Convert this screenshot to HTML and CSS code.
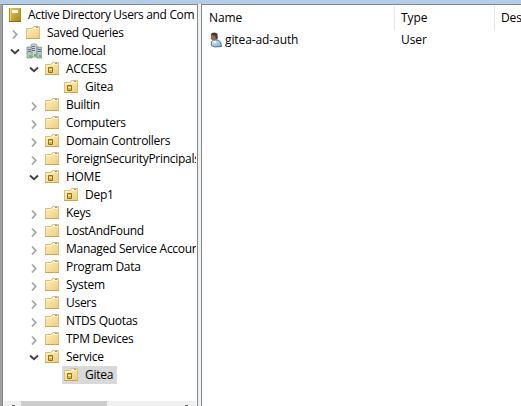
FILE: index.html
```html
<!DOCTYPE html>
<html lang="en">
<head>
<meta charset="utf-8">
<title>Active Directory Users and Computers</title>
<link rel="stylesheet" href="styles.css">
</head>
<body>
<svg class="defs" aria-hidden="true">
  <defs>
    <linearGradient id="fold" x1="0" y1="0" x2="1" y2="1"><stop offset="0" stop-color="#fff0c2"/><stop offset="1" stop-color="#eccd7c"/></linearGradient>
    <linearGradient id="gold" x1="0" y1="0" x2="1" y2="1"><stop offset="0" stop-color="#e6cb5c"/><stop offset="1" stop-color="#a5831a"/></linearGradient>
    <linearGradient id="shirt" x1="0" y1="0" x2="1" y2="1"><stop offset="0" stop-color="#d8effb"/><stop offset="1" stop-color="#78acd2"/></linearGradient>
    <symbol id="folder" viewBox="0 0 16 16">
      <path d="M1.5 3.5H7L8.5 1.5H14.5V13.5H1.5Z" fill="url(#fold)" stroke="#dfbf75"/>
      <path d="M9 2.5H13.5M2 4.5H7.5L8.5 3.5H14" stroke="#fff3c7" fill="none"/>
      <path d="M11 2.5H13" stroke="#4ca0dc"/>
      <path d="M1 13.5H15" stroke="#cda654"/>
    </symbol>
    <symbol id="ou" viewBox="0 0 16 16">
      <use href="#folder"/>
      <path d="M4.5 6.5H8.5V11.5H4.5Z" fill="#d9b84f" stroke="#947014"/>
      <path d="M5 8.5H8" stroke="#fff2b4"/>
    </symbol>
    <symbol id="right" viewBox="0 0 10 10"><path d="M3 1.5L6.7 5.5L3 9.5" fill="none" stroke="#a6a6a6" stroke-width="1.8"/></symbol>
    <symbol id="down" viewBox="0 0 10 10"><path d="M1 2.5L5 6.2L9 2.5" fill="none" stroke="#404040" stroke-width="1.9"/></symbol>
  </defs>
</svg>
<div class="window">
  <nav class="tree">
    <div class="rows">
      <div class="row root">
        <svg class="icon" viewBox="0 0 16 16"><path d="M1 1H13V15H1Z" fill="url(#gold)"/><path d="M1.5 1V15M12.5 1V15" stroke="#b18c20"/><path d="M2.5 1V15" stroke="#f0d76c"/><path d="M4 3H10V6H4Z" fill="#fffbea"/><path d="M1 14.5H13" stroke="#8b6809"/></svg>
        <span class="label">Active Directory Users and Com</span>
      </div>
      <div class="row l1"><svg class="arrow"><use href="#right"/></svg><svg class="icon"><use href="#folder"/></svg><span class="label">Saved Queries</span></div>
      <div class="row l1"><svg class="arrow"><use href="#down"/></svg>
        <svg class="icon domain" viewBox="0 0 16 16"><path d="M6 1H10L11 2V14H5V2Z" fill="#c8d1d6" stroke="#79868d" stroke-width=".7"/><path d="M1 4H5L6 5V15H1ZM11 4H15L16 5V15H11Z" fill="#bbc6cc" stroke="#728087" stroke-width=".7"/><path d="M6 3.5H9M6 5.5H9M6 7.5H9M2 6.5H5M2 8.5H5M12 6.5H15M12 8.5H15" stroke="#62717a"/><path d="M3 12H5V14H3ZM8 11H10V13H8ZM13 12H15V14H13Z" fill="#35dc20"/></svg>
        <span class="label">home.local</span></div>
      <div class="row l2"><svg class="arrow"><use href="#down"/></svg><svg class="icon"><use href="#ou"/></svg><span class="label">ACCESS</span></div>
      <div class="row l3"><svg class="icon"><use href="#ou"/></svg><span class="label">Gitea</span></div>
      <div class="row l2"><svg class="arrow"><use href="#right"/></svg><svg class="icon"><use href="#folder"/></svg><span class="label">Builtin</span></div>
      <div class="row l2"><svg class="arrow"><use href="#right"/></svg><svg class="icon"><use href="#folder"/></svg><span class="label">Computers</span></div>
      <div class="row l2"><svg class="arrow"><use href="#right"/></svg><svg class="icon"><use href="#ou"/></svg><span class="label">Domain Controllers</span></div>
      <div class="row l2"><svg class="arrow"><use href="#right"/></svg><svg class="icon"><use href="#folder"/></svg><span class="label">ForeignSecurityPrincipals</span></div>
      <div class="row l2"><svg class="arrow"><use href="#down"/></svg><svg class="icon"><use href="#ou"/></svg><span class="label">HOME</span></div>
      <div class="row l3"><svg class="icon"><use href="#ou"/></svg><span class="label">Dep1</span></div>
      <div class="row l2"><svg class="arrow"><use href="#right"/></svg><svg class="icon"><use href="#folder"/></svg><span class="label">Keys</span></div>
      <div class="row l2"><svg class="arrow"><use href="#right"/></svg><svg class="icon"><use href="#folder"/></svg><span class="label">LostAndFound</span></div>
      <div class="row l2"><svg class="arrow"><use href="#right"/></svg><svg class="icon"><use href="#folder"/></svg><span class="label">Managed Service Accounts</span></div>
      <div class="row l2"><svg class="arrow"><use href="#right"/></svg><svg class="icon"><use href="#folder"/></svg><span class="label">Program Data</span></div>
      <div class="row l2"><svg class="arrow"><use href="#right"/></svg><svg class="icon"><use href="#folder"/></svg><span class="label">System</span></div>
      <div class="row l2"><svg class="arrow"><use href="#right"/></svg><svg class="icon"><use href="#folder"/></svg><span class="label">Users</span></div>
      <div class="row l2"><svg class="arrow"><use href="#right"/></svg><svg class="icon"><use href="#folder"/></svg><span class="label">NTDS Quotas</span></div>
      <div class="row l2"><svg class="arrow"><use href="#right"/></svg><svg class="icon"><use href="#folder"/></svg><span class="label">TPM Devices</span></div>
      <div class="row l2"><svg class="arrow"><use href="#down"/></svg><svg class="icon"><use href="#ou"/></svg><span class="label">Service</span></div>
      <div class="row l3 selected"><div class="pick"><svg class="icon"><use href="#ou"/></svg><span class="label">Gitea</span></div></div>
    </div>
    <div class="scrollbar"><i class="tip"></i><div class="thumb"></div><i class="tip end"></i></div>
  </nav>
  <main class="list">
    <div class="header"><span class="name">Name</span><span class="type">Type</span><span class="desc">Desc</span></div>
    <div class="entry">
      <span class="name"><svg class="user" viewBox="0 0 14 16"><path d="M2.5 14L2.5 10L5 8L10 8L12.5 10.5L13.5 15L6 15.5Z" fill="url(#shirt)" stroke="#30495e" stroke-width=".8"/><path d="M4 8L8 9L7 12L4 9Z" fill="#f7fbff"/><path d="M2 2Q5-1 8 2L8.5 6L6 9L3 8L2 6Z" fill="#9b6945"/><path d="M2 3L3 .5L6 0L9 1L9.5 6L7.5 8L7 4L4 2.5Z" fill="#3b3b3c"/></svg>gitea-ad-auth</span>
      <span class="type">User</span>
    </div>
  </main>
</div>
</body>
</html>
```

FILE: styles.css
```css
* { box-sizing: border-box; }
body {
  margin: 0;
  overflow: hidden;
  background: #f0f0f0;
  color: #000;
  font: 12px/18px "Open Sans", "Noto Sans", sans-serif;
  letter-spacing: -0.1px;
}
.defs { position: absolute; width: 0; height: 0; }
.window {
  display: grid;
  grid-template-columns: 196px 1fr;
  column-gap: 3px;
  height: 406px;
  padding-left: 2px;
  border-top: 4px solid #b4cde6;
  background: linear-gradient(to right, #a0a0a0 2px, #f0f0f0 2px);
}
.tree {
  display: flex;
  flex-direction: column;
  min-width: 0;
  padding: 1px 1px 0 1px;
  border: solid #828790;
  border-width: 1px 1px 0 1px;
  background: #fff;
  letter-spacing: -0.28px;
}
.rows { flex: 1; overflow: hidden; }
.row { display: flex; align-items: center; height: 18px; white-space: nowrap; }
.root { padding-left: 4px; letter-spacing: -0.34px; }
.l1 { padding-left: 6px; }
.l2 { padding-left: 25px; }
.l3 { padding-left: 59px; }
.arrow { flex: none; width: 10px; height: 10px; margin: 1px 5px 0 0; }
.icon { flex: none; width: 16px; height: 16px; margin-right: 6px; }
.root .icon { margin-right: 4px; }
.domain { margin-left: 1px; margin-right: 5px; }
.pick {
  display: flex;
  align-items: center;
  height: 18px;
  margin-left: -1px;
  padding: 0 4px 0 1px;
  background: #d9d9d9;
}
.scrollbar {
  display: flex;
  align-items: flex-start;
  height: 5px;
  background: #f0f0f0;
}
.thumb { width: 86px; height: 5px; margin-left: 6px; background: #cdcdcd; }
.tip { width: 3px; height: 1px; margin: 4px 0 0 8px; background: #606060; }
.tip.end { margin-left: auto; margin-right: 8px; }
.list {
  min-width: 0;
  overflow: hidden;
  padding-top: 1px;
  border: solid #828790;
  border-width: 1px 0 0 1px;
  background: #fff;
}
.header, .entry { display: grid; grid-template-columns: 193px 100px 1fr; white-space: nowrap; }
.header { height: 24px; line-height: 24px; }
.header span { padding-left: 7px; border-right: 1px solid #e5e5e5; }
.header .type, .entry .type { padding-left: 6px; }
.header .desc { padding-left: 6px; border-right: 0; }
.entry { height: 18px; margin-top: 1px; line-height: 18px; }
.entry .name { display: flex; align-items: center; padding-left: 7px; }
.user { width: 13px; height: 16px; margin-right: 3px; }
```
